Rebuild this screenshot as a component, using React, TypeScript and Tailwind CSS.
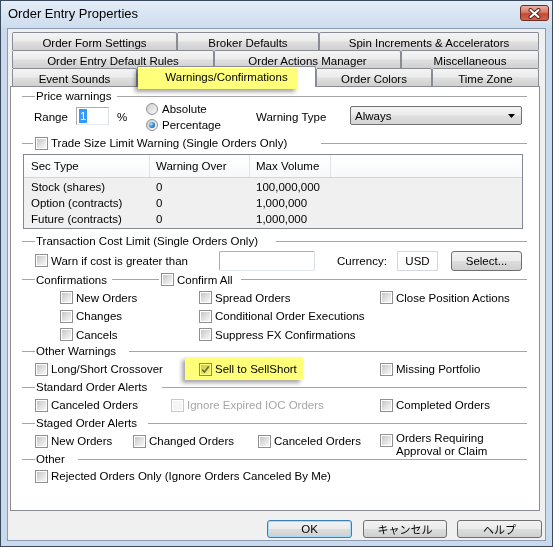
import clsx from "clsx";
import type { ReactNode } from "react";

const tabRows = [
  [
    { label: "Order Form Settings", w: "w-[165px]" },
    { label: "Broker Defaults", w: "w-[142px]" },
    { label: "Spin Increments & Accelerators", w: "w-[220px]" },
  ],
  [
    { label: "Order Entry Default Rules", w: "w-[202px]" },
    { label: "Order Actions Manager", w: "w-[187px]" },
    { label: "Miscellaneous", w: "w-[138px]" },
  ],
];

const secRows = [
  { type: "Stock (shares)", over: "0", max: "100,000,000" },
  { type: "Option (contracts)", over: "0", max: "1,000,000" },
  { type: "Future (contracts)", over: "0", max: "1,000,000" },
];

const btn =
  "flex items-center justify-center rounded-[3px] border bg-[linear-gradient(#f2f2f2,#ebebeb_48%,#dddddd_52%,#cfcfcf)]";

function CheckBox({ checked = false, disabled = false }: { checked?: boolean; disabled?: boolean }) {
  return (
    <span
      className={clsx(
        "relative inline-flex h-[13px] w-[13px] shrink-0 border bg-white p-[1px]",
        disabled ? "border-[#c8c8c8]" : "border-[#8e8f8f]"
      )}
    >
      <span
        className={clsx(
          "h-full w-full",
          disabled ? "bg-[#f5f5f5]" : "bg-linear-to-br from-[#c6c6c6] via-[#e0e0e0] to-[#f8f8f8]"
        )}
      />
      {checked && (
        <svg viewBox="0 0 13 13" className="absolute -left-px -top-px h-[13px] w-[13px]">
          <path d="M3.2 6.6 L5.4 9 L9.8 3.4" stroke="#6f6f6f" strokeWidth="1.7" fill="none" />
        </svg>
      )}
    </span>
  );
}

function Option({
  label,
  checked,
  disabled,
  className,
}: {
  label: string;
  checked?: boolean;
  disabled?: boolean;
  className?: string;
}) {
  return (
    <div className={clsx("flex items-center gap-[3px] whitespace-nowrap", className)}>
      <CheckBox checked={checked} disabled={disabled} />
      <span className={disabled ? "text-[#a6a6a6]" : undefined}>{label}</span>
    </div>
  );
}

function Radio({ label, checked = false }: { label: string; checked?: boolean }) {
  return (
    <div className="flex h-[16px] items-center gap-[4px]">
      <span className="inline-flex h-[12px] w-[12px] items-center justify-center rounded-full border border-[#8e8f8f] bg-linear-to-br from-[#cfcfcf] to-[#f8f8f8]">
        {checked && (
          <span className="h-[6px] w-[6px] rounded-full bg-[radial-gradient(circle_at_35%_35%,#b5e6ff,#2a7fd0_55%,#0e4a8a)]" />
        )}
      </span>
      <span>{label}</span>
    </div>
  );
}

function Legend({
  children,
  h,
  lineW = "w-[13px]",
  labelW,
}: {
  children: ReactNode;
  h: string;
  lineW?: string;
  labelW: string;
}) {
  return (
    <div className={clsx("flex items-center", h)}>
      <span className={clsx("h-px bg-[#a5a5a5]", lineW)} />
      <span className={clsx("ml-[1px] flex shrink-0 items-center whitespace-nowrap", labelW)}>{children}</span>
      <span className="h-px flex-1 bg-[#a5a5a5]" />
    </div>
  );
}

function Tab({ label, w }: { label: string; w: string }) {
  return (
    <div
      className={clsx(
        "flex h-[18px] items-center justify-center whitespace-nowrap rounded-t-[2px] border border-b-0 border-[#898c95] pt-[2px] bg-[linear-gradient(#f4f4f4,#ececec_45%,#dedede_55%,#d0d0d0)]",
        w
      )}
    >
      {label}
    </div>
  );
}

export default function App() {
  return (
    <div className="relative flex h-[547px] w-[553px] flex-col overflow-hidden border border-[#3a4a5c] bg-[#c9daed] font-[family-name:'Liberation_Sans',Arial,sans-serif] text-[11.5px] leading-[16px] text-black">
      {/* title bar */}
      <div className="flex h-[27px] justify-between bg-linear-to-b from-[#e4edf7] to-[#cddcee] pl-[7px] pr-[3px]">
        <span className="mt-[5px] text-[13px] leading-[16px]">Order Entry Properties</span>
        <div className="mt-[4px] flex h-[16px] w-[29px] items-center justify-center rounded-[3px] border border-[#6d2d22] bg-[linear-gradient(#eab0a3,#d77a64_45%,#c54b33_55%,#d2654a)]">
          <svg viewBox="0 0 13 11" className="h-[11px] w-[13px]">
            <path d="M2.5 2 L10.5 9 M10.5 2 L2.5 9" stroke="#5b2218" strokeWidth="4" strokeLinecap="round" />
            <path d="M2.5 2 L10.5 9 M10.5 2 L2.5 9" stroke="#ffffff" strokeWidth="2.1" strokeLinecap="round" />
          </svg>
        </div>
      </div>

      <div className="mx-[6px] mb-[5px] flex-1 border border-[#8a9cb3] bg-[#f0f0f0] pt-[3px]">
        {/* tabs */}
        <div className="ml-[4px] w-[527px]">
          {tabRows.map((row, i) => (
            <div key={i} className="flex">
              {row.map((t) => (
                <Tab key={t.label} label={t.label} w={t.w} />
              ))}
            </div>
          ))}
          <div className="flex h-[18px] items-end">
            <Tab label="Event Sounds" w="w-[125px]" />
            <div className="relative top-[1px] z-10 flex h-[21px] w-[179px] items-center justify-center rounded-t-[2px] border border-b-0 border-[#898c95] bg-white">
              Warnings/Confirmations
            </div>
            <Tab label="Order Colors" w="w-[116px]" />
            <Tab label="Time Zone" w="w-[107px]" />
          </div>
        </div>

        {/* tab panel */}
        <div className="ml-[2px] h-[425px] w-[530px] border border-[#898c95] bg-white pl-[11px] pr-[12px]">
          <Legend h="h-[18px]" labelW="w-[81px]">
            Price warnings
          </Legend>
          <div className="flex h-[29px]">
            <span className="ml-[12px] mt-[4px] w-[42px]">Range</span>
            <div className="mt-[2px] flex h-[18px] w-[33px] items-center border border-[#abadb3] border-b-[#e3e9ef] border-r-[#dbdfe6] bg-white pl-[2px]">
              <span className="bg-[#3399ff] px-[1px] leading-[14px] text-white">1</span>
            </div>
            <span className="ml-[8px] mt-[4px] w-[29px]">%</span>
            <div className="-mt-[4px] flex w-[110px] flex-col">
              <Radio label="Absolute" />
              <Radio label="Percentage" checked />
            </div>
            <span className="mt-[4px] w-[94px]">Warning Type</span>
            <div className="mt-[1px] flex h-[19px] w-[172px] items-center justify-between rounded-[2px] border border-[#707070] bg-[linear-gradient(#f4f4f4,#ebebeb_48%,#dfdfdf_52%,#d5d5d5)] pl-[4px] pr-[6px]">
              <span>Always</span>
              <svg viewBox="0 0 7 4" className="h-[4px] w-[7px]">
                <path d="M0 0 L7 0 L3.5 4 Z" fill="#000" />
              </svg>
            </div>
          </div>

          <Legend h="h-[18px]" lineW="w-[11px]" labelW="w-[287px]">
            <span className="ml-[1px] flex items-center gap-[3px]">
              <CheckBox />
              Trade Size Limit Warning (Single Orders Only)
            </span>
          </Legend>

          <div className="ml-[1px] mt-[2px] h-[75px] w-[500px] border border-[#828790] bg-[#f0f0f0]">
            <div className="flex h-[23px] items-center border-b border-[#d5d5d5] bg-linear-to-b from-white to-[#f7f8fa]">
              <span className="flex h-full w-[126px] items-center border-r border-[#e2e3e5] pl-[7px]">Sec Type</span>
              <span className="flex h-full w-[100px] items-center border-r border-[#e2e3e5] pl-[6px]">Warning Over</span>
              <span className="flex h-full w-[81px] items-center border-r border-[#e2e3e5] pl-[6px]">Max Volume</span>
            </div>
            <div className="pt-[1px]">
              {secRows.map((r) => (
                <div key={r.type} className="flex h-[16px] items-center">
                  <span className="w-[126px] pl-[7px]">{r.type}</span>
                  <span className="w-[100px] pl-[6px]">{r.over}</span>
                  <span className="w-[81px] pl-[6px]">{r.max}</span>
                </div>
              ))}
            </div>
          </div>

          <div className="mt-[3px]">
            <Legend h="h-[18px]" labelW="w-[240px]">
              Transaction Cost Limit (Single Orders Only)
            </Legend>
          </div>
          <div className="flex h-[21px] items-center">
            <Option label="Warn if cost is greater than" className="ml-[13px] w-[184px]" />
            <div className="h-[20px] w-[96px] rounded-[2px] border border-[#abadb3] border-b-[#e3e9ef] border-r-[#dbdfe6] bg-white" />
            <span className="ml-[22px] w-[60px]">Currency:</span>
            <div className="flex h-[20px] w-[41px] items-center justify-center border border-[#d5d9de] bg-white">USD</div>
            <div className={clsx(btn, "ml-[13px] h-[20px] w-[71px] border-[#707070]")}>Select...</div>
          </div>

          <div className="flex h-[17px] items-center">
            <span className="h-px w-[13px] bg-[#a5a5a5]" />
            <span className="ml-[1px] w-[76px] whitespace-nowrap">Confirmations</span>
            <span className="h-px w-[47px] bg-[#a5a5a5]" />
            <span className="ml-[2px] flex w-[80px] items-center gap-[3px] whitespace-nowrap">
              <CheckBox />
              Confirm All
            </span>
            <span className="h-px flex-1 bg-[#a5a5a5]" />
          </div>
          <div className="flex h-[19px] items-center pl-[38px]">
            <Option label="New Orders" className="w-[139px]" />
            <Option label="Spread Orders" className="w-[181px]" />
            <Option label="Close Position Actions" />
          </div>
          <div className="flex h-[18px] items-center pl-[38px]">
            <Option label="Changes" className="w-[139px]" />
            <Option label="Conditional Order Executions" />
          </div>
          <div className="flex h-[19px] items-center pl-[38px]">
            <Option label="Cancels" className="w-[139px]" />
            <Option label="Suppress FX Confirmations" />
          </div>

          <Legend h="h-[14px]" labelW="w-[93px]">
            Other Warnings
          </Legend>
          <div className="flex h-[22px] items-center pl-[13px]">
            <Option label="Long/Short Crossover" className="w-[164px]" />
            <Option label="Sell to SellShort" checked className="w-[181px]" />
            <Option label="Missing Portfolio" />
          </div>

          <Legend h="h-[14px]" labelW="w-[126px]">
            Standard Order Alerts
          </Legend>
          <div className="flex h-[22px] items-center pl-[13px]">
            <Option label="Canceled Orders" className="w-[136px]" />
            <Option label="Ignore Expired IOC Orders" disabled className="w-[209px]" />
            <Option label="Completed Orders" />
          </div>

          <Legend h="h-[14px]" labelW="w-[112px]">
            Staged Order Alerts
          </Legend>
          <div className="flex h-[22px] items-center pl-[13px]">
            <Option label="New Orders" className="w-[98px]" />
            <Option label="Changed Orders" className="w-[125px]" />
            <Option label="Canceled Orders" className="w-[122px]" />
            <div className="flex items-start gap-[3px] self-start pt-[4px]">
              <CheckBox />
              <span className="-mt-[2px] leading-[13px]">
                Orders Requiring
                <br />
                Approval or Claim
              </span>
            </div>
          </div>

          <Legend h="h-[14px]" labelW="w-[42px]">
            Other
          </Legend>
          <div className="flex h-[20px] items-center pl-[13px]">
            <Option label="Rejected Orders Only (Ignore Orders Canceled By Me)" />
          </div>
        </div>

        {/* dialog buttons */}
        <div className="ml-[259px] mt-[9px] flex">
          <div className={clsx(btn, "h-[18px] w-[85px] border-[#3c7fb1] shadow-[inset_0_0_0_1px_#a6daf7]")}>OK</div>
          <div className={clsx(btn, "ml-[11px] h-[18px] w-[84px] border-[#707070] font-[family-name:'Noto_Sans_CJK_JP',sans-serif] text-[11px]")}>
            キャンセル
          </div>
          <div className={clsx(btn, "ml-[10px] h-[18px] w-[85px] border-[#707070] font-[family-name:'Noto_Sans_CJK_JP',sans-serif] text-[11px]")}>
            ヘルプ
          </div>
        </div>
      </div>

      {/* yellow callout highlights */}
      <div className="pointer-events-none absolute left-[137px] top-[67px] z-20 h-[21px] w-[160px] bg-[#ffff7a] mix-blend-multiply shadow-[-3px_3px_4px_rgba(0,0,0,0.35)]" />
      <div className="pointer-events-none absolute left-[184px] top-[356px] z-20 h-[23px] w-[118px] bg-[#ffff7a] mix-blend-multiply shadow-[-3px_3px_4px_rgba(0,0,0,0.35)]" />
    </div>
  );
}
